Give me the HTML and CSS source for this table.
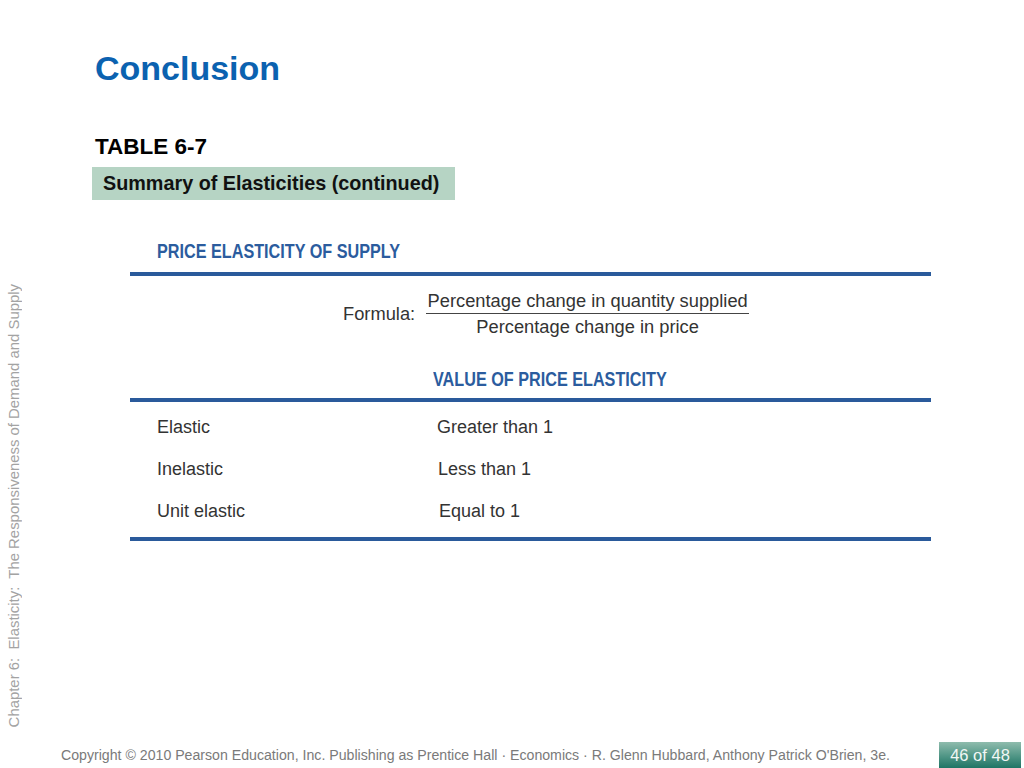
FILE: index.html
```html
<!DOCTYPE html>
<html>
<head>
<meta charset="utf-8">
<link rel="stylesheet" href="styles.css">
</head>
<body>
<div class="slide">
  <div class="side"><span class="side-text">Chapter 6:&nbsp; Elasticity:&nbsp; The Responsiveness of Demand and Supply</span></div>
  <div class="content">
    <h1 class="title">Conclusion</h1>
    <div class="table-label">TABLE 6-7</div>
    <div class="caption">Summary of Elasticities (continued)</div>
    <div class="etable">
      <div class="ehead ehead-first"><span class="cond">PRICE ELASTICITY OF SUPPLY</span></div>
      <div class="rule"></div>
      <div class="formula">
        <span class="formula-label">Formula:</span>
        <div class="fraction">
          <div class="num">Percentage change in quantity supplied</div>
          <div class="den">Percentage change in price</div>
        </div>
      </div>
      <div class="ehead ehead-value"><span class="cond">VALUE OF PRICE ELASTICITY</span></div>
      <div class="rule rule-mid"></div>
      <div class="rows">
        <div class="row"><span>Elastic</span><span>Greater than 1</span></div>
        <div class="row"><span>Inelastic</span><span class="v2">Less than 1</span></div>
        <div class="row"><span>Unit elastic</span><span class="v3">Equal to 1</span></div>
      </div>
      <div class="rule rule-bottom"></div>
    </div>
  </div>
  <div class="footer">
    <span class="copyright">Copyright © 2010 Pearson Education, Inc. Publishing as Prentice Hall · Economics · R. Glenn Hubbard, Anthony Patrick O'Brien, 3e.</span>
    <span class="page">46 of 48</span>
  </div>
</div>
</body>
</html>
```
FILE: styles.css
```css
* { box-sizing: border-box; }
html, body { margin: 0; padding: 0; background: #ffffff; }
body { font-family: "Liberation Sans", Arial, Helvetica, sans-serif; }

.slide {
  width: 1024px;
  height: 768px;
  display: grid;
  grid-template-columns: 92px 1fr;
  grid-template-rows: 1fr 26px;
  overflow: hidden;
}

.side {
  display: flex;
  align-items: flex-end;
  padding: 0 0 15px 6px;
}
.side-text {
  writing-mode: vertical-rl;
  transform: rotate(180deg);
  font-size: 14.9px;
  line-height: 17px;
  color: #a3a3a3;
  white-space: nowrap;
}

.content {
  padding-top: 48px;
}
.title {
  margin: 0;
  padding-left: 3px;
  font-size: 34px;
  line-height: 40px;
  font-weight: bold;
  color: #0b62b0;
}
.table-label {
  margin-top: 46px;
  padding-left: 3px;
  font-size: 22.5px;
  line-height: 26px;
  font-weight: bold;
  color: #000;
}
.caption {
  margin-top: 7px;
  width: 363px;
  height: 33px;
  padding: 0 0 0 11px;
  background: #b6d4c4;
  font-size: 19.8px;
  line-height: 33px;
  font-weight: bold;
  color: #111;
  white-space: nowrap;
}

.etable {
  margin-top: 39px;
  margin-left: 38px;
  width: 801px;
}
.ehead {
  font-size: 20px;
  line-height: 24px;
  font-weight: bold;
  color: #2b5c9e;
  white-space: nowrap;
}
.cond {
  display: inline-block;
  transform: scaleX(0.81);
  transform-origin: left center;
}
.ehead-first { padding-left: 27px; margin-bottom: 9px; }
.ehead-value { padding-left: 303px; margin-top: 30px; margin-bottom: 7px; }

.rule {
  height: 4px;
  background: #2a5a9b;
}
.rule-bottom { margin-top: 5px; }

.formula {
  display: flex;
  align-items: center;
  padding: 15px 0 0 213px;
  font-size: 18.3px;
  color: #333;
}
.formula-label {
  line-height: 20px;
  margin-right: 11px;
}
.fraction {
  display: flex;
  flex-direction: column;
  align-items: stretch;
  width: 323px;
  text-align: center;
}
.num {
  line-height: 20px;
  padding-bottom: 2px;
  border-bottom: 1px solid #444;
  white-space: nowrap;
}
.den {
  line-height: 20px;
  margin-top: 3px;
  white-space: nowrap;
}

.rows {
  padding-top: 4px;
}
.row {
  display: grid;
  grid-template-columns: 280px 1fr;
  padding-left: 27px;
  font-size: 18px;
  line-height: 42px;
  color: #333;
}
.v2 { padding-left: 1px; }
.v3 { padding-left: 2px; }

.footer {
  grid-column: 1 / 3;
  display: flex;
  align-items: center;
  justify-content: space-between;
  padding-left: 61px;
  padding-right: 3px;
}
.copyright {
  font-size: 14.15px;
  color: #7a7a7a;
  white-space: nowrap;
}
.page {
  width: 82px;
  height: 26px;
  line-height: 26px;
  text-align: center;
  font-size: 16.5px;
  color: #f2f7f5;
  background: linear-gradient(to bottom, #8fbcad 0%, #4f9585 55%, #1f7565 100%);
}
```
